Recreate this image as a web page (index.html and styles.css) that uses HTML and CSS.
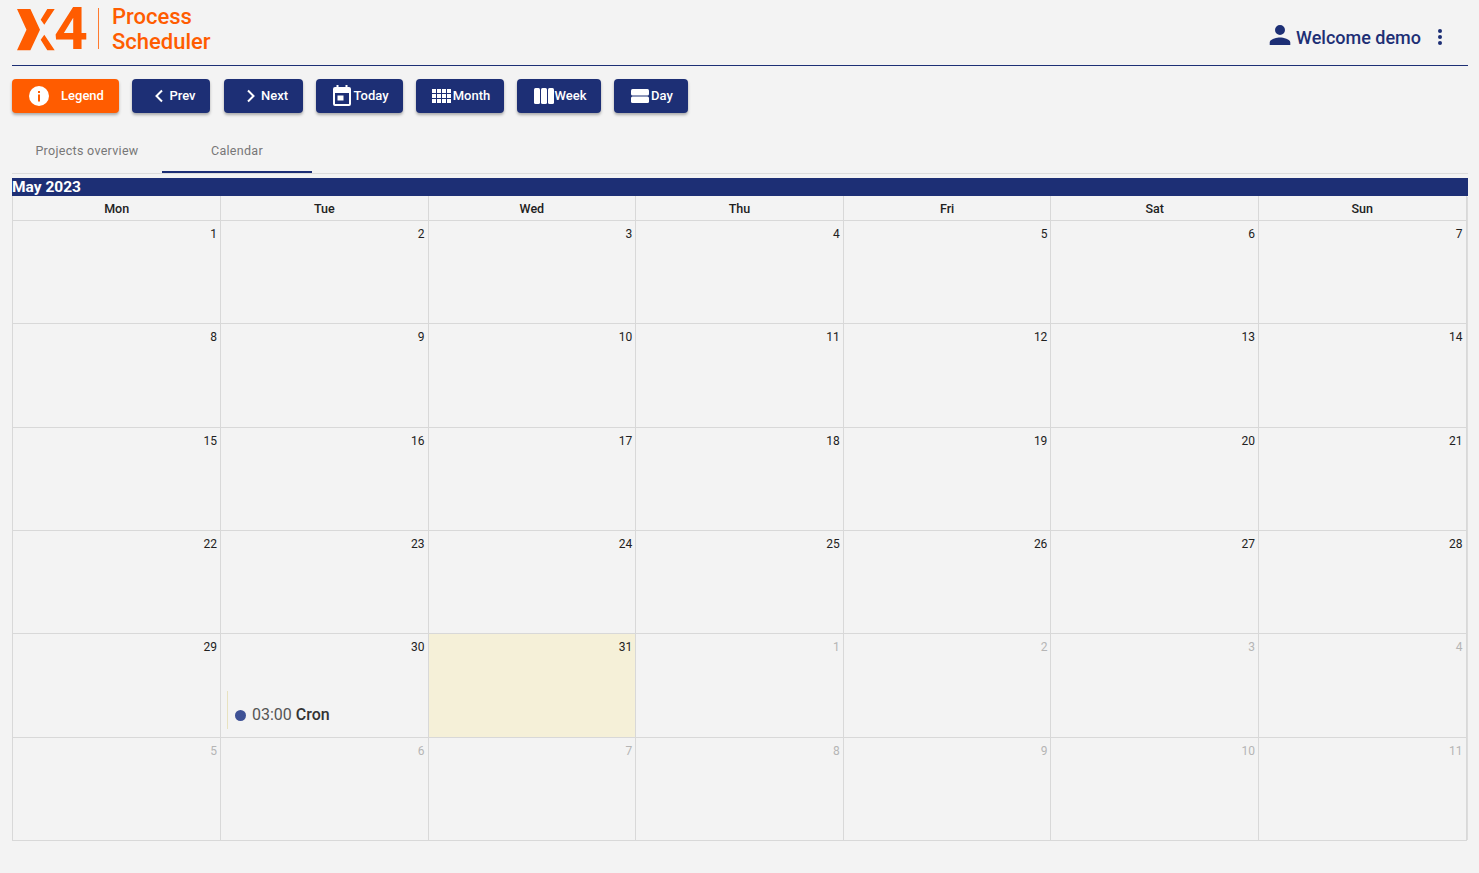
FILE: index.html
```html
<!DOCTYPE html>
<html lang="en">
<head>
    <meta charset="UTF-8">
    <title>Process Scheduler</title>
    <link rel="stylesheet" href="styles.css">
</head>
<body>
    <header class="top-bar">
        <div class="brand">
            <svg class="brand-x" width="38" height="42" viewBox="0 0 38 42"><path fill="#ff5c00" d="M0 0h13.400L23 20.700 13.400 41.300H0L9.500 20.700zM23.700 10.700 30.300 0h7.400L27.300 15.700zM23.700 30.700l3.600-5 10.400 15.600h-7.400z"/></svg>
            <span class="brand-four">4</span>
            <span class="brand-line"></span>
            <span class="brand-name">Process<br>Scheduler</span>
        </div>
        <div class="user">
            <svg class="user-icon" width="26" height="26" viewBox="0 0 24 24"><path fill="#1d2f75" d="M12 12a4.600 4.600 0 1 0 0-9.200 4.600 4.600 0 0 0 0 9.200zm0 2.300c-3.100 0-9.500 1.500-9.500 4.600v2.300h19v-2.300c0-3.100-6.400-4.600-9.500-4.600z"/></svg>
            <span class="user-name">Welcome demo</span>
            <svg class="user-menu" width="6" height="18" viewBox="0 0 6 18"><circle cx="3" cy="3" r="2"/><circle cx="3" cy="9" r="2"/><circle cx="3" cy="15" r="2"/></svg>
        </div>
    </header>

    <div class="toolbar">
        <button class="btn btn-legend">
            <svg width="20" height="20" viewBox="0 0 20 20"><circle cx="10" cy="10" r="10" fill="#fff"/><rect x="9" y="8.500" width="2" height="7" fill="#ff5c00"/><rect x="9" y="5" width="2" height="2" fill="#ff5c00"/></svg>
            <span class="legend-label">Legend</span>
        </button>
        <button class="btn btn-prev">
            <svg width="10" height="14" viewBox="0 0 10 14"><path d="M8 1.500 2.500 7 8 12.500" fill="none" stroke="#fff" stroke-width="2"/></svg>
            Prev
        </button>
        <button class="btn btn-next">
            <svg width="10" height="14" viewBox="0 0 10 14"><path d="M2 1.500 7.500 7 2 12.500" fill="none" stroke="#fff" stroke-width="2"/></svg>
            Next
        </button>
        <button class="btn btn-today">
            <svg width="20" height="21" viewBox="0 0 20 21"><path fill="#fff" d="M3 2h1.500V0h2v2h7V0h2v2H17a2 2 0 0 1 2 2v15a2 2 0 0 1-2 2H3a2 2 0 0 1-2-2V4a2 2 0 0 1 2-2zm0 6v11h14V8zm2.500 2.500h6v5h-6z"/></svg>
            Today
        </button>
        <button class="btn btn-month">
            <svg width="19" height="14" viewBox="0 0 19 14"><path fill="#fff" d="M0 0h4v4H0zM5 0h4v4H5zM10 0h4v4h-4zM15 0h4v4h-4zM0 5h4v4H0zM5 5h4v4H5zM10 5h4v4h-4zM15 5h4v4h-4zM0 10h4v4H0zM5 10h4v4H5zM10 10h4v4h-4zM15 10h4v4h-4z"/></svg>
            Month
        </button>
        <button class="btn btn-week">
            <svg width="20" height="16" viewBox="0 0 20 16"><rect width="6" height="16" rx="1.500" fill="#fff"/><rect x="7" width="6" height="16" rx="1.500" fill="#fff"/><rect x="14" width="6" height="16" rx="1.500" fill="#fff"/></svg>
            Week
        </button>
        <button class="btn btn-day">
            <svg width="18" height="14" viewBox="0 0 18 14"><rect width="18" height="6.500" rx="1.500" fill="#fff"/><rect y="7.500" width="18" height="6.500" rx="1.500" fill="#fff"/></svg>
            Day
        </button>
    </div>

    <nav class="tabs">
        <a class="tab">Projects overview</a>
        <a class="tab tab-active">Calendar</a>
    </nav>

    <section class="calendar">
        <h2 class="month-title">May 2023</h2>
        <div class="month-grid">
            <div class="day-name">Mon</div>
            <div class="day-name">Tue</div>
            <div class="day-name">Wed</div>
            <div class="day-name">Thu</div>
            <div class="day-name">Fri</div>
            <div class="day-name">Sat</div>
            <div class="day-name">Sun</div>

            <div class="cell">1</div>
            <div class="cell">2</div>
            <div class="cell">3</div>
            <div class="cell">4</div>
            <div class="cell">5</div>
            <div class="cell">6</div>
            <div class="cell">7</div>

            <div class="cell">8</div>
            <div class="cell">9</div>
            <div class="cell">10</div>
            <div class="cell">11</div>
            <div class="cell">12</div>
            <div class="cell">13</div>
            <div class="cell">14</div>

            <div class="cell">15</div>
            <div class="cell">16</div>
            <div class="cell">17</div>
            <div class="cell">18</div>
            <div class="cell">19</div>
            <div class="cell">20</div>
            <div class="cell">21</div>

            <div class="cell">22</div>
            <div class="cell">23</div>
            <div class="cell">24</div>
            <div class="cell">25</div>
            <div class="cell">26</div>
            <div class="cell">27</div>
            <div class="cell">28</div>

            <div class="cell">29</div>
            <div class="cell">30
                <div class="event">
                    <span class="event-dot"></span>
                    <span class="event-time">03:00</span>
                    <b class="event-name">Cron</b>
                </div>
            </div>
            <div class="cell cell-today">31</div>
            <div class="cell cell-other">1</div>
            <div class="cell cell-other">2</div>
            <div class="cell cell-other">3</div>
            <div class="cell cell-other">4</div>

            <div class="cell cell-other">5</div>
            <div class="cell cell-other">6</div>
            <div class="cell cell-other">7</div>
            <div class="cell cell-other">8</div>
            <div class="cell cell-other">9</div>
            <div class="cell cell-other">10</div>
            <div class="cell cell-other">11</div>
        </div>
    </section>
</body>
</html>
```

FILE: styles.css
```css
/* page */
body {
    margin: 0;
    background-color: #f3f3f3;
    font-family: Roboto, "Liberation Sans", sans-serif;
    color: #212121;
}

/* header */
.top-bar {
    display: flex;
    justify-content: space-between;
    align-items: center;
    height: 65px;
    margin: 0 11px 0 12px;
    border-bottom: 1px solid #1d2f75;
}

.brand {
    display: flex;
    align-items: center;
    height: 58px;
    margin-bottom: 7px;
    padding-left: 5px;
    color: #ff5c00;
}

.brand-x {
    margin-top: 1px;
}

.brand-four {
    width: 44px;
    margin-left: -1px;
    font-size: 59px;
    font-weight: 700;
    line-height: 58px;
}

.brand-line {
    width: 1px;
    height: 41px;
    margin-top: -1px;
    background-color: #ff7a2e;
}

.brand-name {
    padding-left: 13px;
    font-size: 22px;
    font-weight: 500;
    line-height: 25px;
}

.user {
    display: flex;
    align-items: center;
    margin-right: 25px;
    margin-top: 9px;
    color: #1d2f75;
}

.user-icon {
    margin-top: -4px;
}

.user-name {
    margin-left: 3px;
    font-size: 18px;
    font-weight: 500;
}

.user-menu {
    margin-left: 16px;
    fill: #1d2f75;
}

/* buttons */
.toolbar {
    display: flex;
    gap: 13px;
    margin: 13px 12px 0;
}

.btn {
    display: flex;
    align-items: center;
    justify-content: center;
    gap: 2px;
    height: 34px;
    padding: 0 0 1px;
    border: none;
    border-radius: 4px;
    background-color: #1d2f75;
    color: #fff;
    font-family: inherit;
    font-size: 13px;
    font-weight: 500;
    box-shadow: 0 2px 3px rgba(0, 0, 0, 0.3);
}

.btn svg {
    flex: none;
}

.btn-legend {
    width: 107px;
    padding-left: 2px;
    background-color: #ff5c00;
}

.legend-label {
    margin-left: 10px;
}

.btn-prev {
    width: 78px;
    gap: 5px;
    padding-left: 8px;
}

.btn-next {
    width: 79px;
    gap: 5px;
    margin-left: 1px;
    padding-left: 7px;
}

.btn-today {
    width: 87px;
    gap: 1px;
    padding-left: 2px;
}

.btn-month {
    width: 88px;
    padding-left: 2px;
}

.btn-week {
    width: 84px;
    gap: 1px;
    padding-left: 2px;
}

.btn-day {
    width: 74px;
    padding-left: 2px;
}

/* tabs */
.tabs {
    display: flex;
    height: 43px;
    margin: 17px 11px 0 12px;
    border-bottom: 1px solid #dcdcdc;
}

.tab {
    width: 150px;
    height: 41px;
    line-height: 41px;
    text-align: center;
    font-size: 12.500px;
    letter-spacing: 0.3px;
    color: #777;
}

.tab-active {
    border-bottom: 2px solid #1d2f75;
}

/* calendar */
.calendar {
    margin: 4px 11px 0 12px;
}

.month-title {
    height: 18px;
    margin: 0;
    background-color: #1d2f75;
    color: #fff;
    font-size: 15.500px;
    font-weight: 700;
    line-height: 19px;
}

.month-grid {
    display: grid;
    grid-template-columns: repeat(7, 1fr);
    grid-template-rows: 25px 103px 104px 103px 103px 104px 103px;
    width: 1453.200px;
    margin-left: 0.400px;
    border-left: 1px solid #d8d8d8;
    box-shadow: 2px 0 0 -1px #dcdcdc;
}

.day-name {
    border-right: 1px solid #d8d8d8;
    border-bottom: 1px solid #d8d8d8;
    font-size: 12.500px;
    font-weight: 500;
    line-height: 25px;
    text-align: center;
}

.cell {
    position: relative;
    padding: 6px 3px 0 0;
    border-right: 1px solid #d8d8d8;
    border-bottom: 1px solid #d8d8d8;
    font-size: 12px;
    line-height: 14px;
    text-align: right;
}

.cell-today {
    background-color: #f5f0d8;
}

.cell-other {
    color: #b5b5b5;
}

/* event overlays the bottom of its day cell */
.event {
    position: absolute;
    left: 6px;
    bottom: 8px;
    display: flex;
    align-items: center;
    height: 38px;
    padding: 10px 0 0 7px;
    box-sizing: border-box;
    border-left: 1px solid #e8e2c0;
    font-size: 16px;
}

.event-dot {
    width: 11px;
    height: 11px;
    margin-right: 6px;
    border-radius: 50%;
    background-color: #3e5195;
}

.event-time {
    color: #555;
    margin-right: 4px;
}

.event-name {
    font-weight: 500;
    color: #333;
}
```
